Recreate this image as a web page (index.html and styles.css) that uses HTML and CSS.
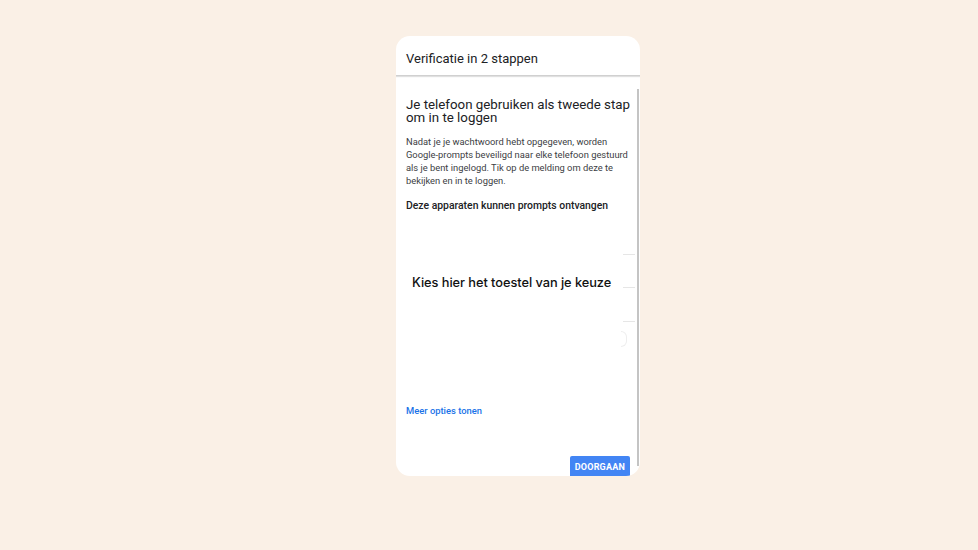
FILE: index.html
```html
<!DOCTYPE html>
<html lang="nl">
<head>
<meta charset="utf-8">
<title>Verificatie in 2 stappen</title>
<link rel="stylesheet" href="styles.css">
</head>
<body>
<div class="card">
  <div class="header">Verificatie in 2 stappen</div>
  <div class="body">
    <div class="main">
      <h1 class="title">Je telefoon gebruiken als tweede stap om in te loggen</h1>
      <p class="text">Nadat je je wachtwoord hebt opgegeven, worden Google-prompts beveiligd naar elke telefoon gestuurd als je bent ingelogd. Tik op de melding om deze te bekijken en in te loggen.</p>
      <h2 class="subtitle">Deze apparaten kunnen prompts ontvangen</h2>
      <div class="devices">
        <div class="choose">Kies hier het toestel van je keuze</div>
        <div class="rail">
          <div class="divider d1"></div>
          <div class="divider d2"></div>
          <div class="divider d3"></div>
          <div class="arc"></div>
        </div>
      </div>
      <a class="more" href="#">Meer opties tonen</a>
      <div class="actions">
        <button class="btn">DOORGAAN</button>
      </div>
    </div>
    <div class="track"></div>
  </div>
</div>
</body>
</html>
```
FILE: styles.css
```css
html, body {
  margin: 0;
  padding: 0;
}
body {
  background: #faf0e6;
  font-family: Roboto, "Liberation Sans", sans-serif;
  color: #202124;
  width: 978px;
  height: 550px;
  overflow: hidden;
}
.card {
  margin: 36px 0 0 396px;
  width: 244px;
  height: 440px;
  background: #fff;
  border-radius: 14px;
  overflow: hidden;
  display: flex;
  flex-direction: column;
}
.header {
  height: 40px;
  flex: none;
  box-sizing: border-box;
  padding: 15px 0 0 10px;
  font-size: 13px;
  line-height: 16px;
  color: #202124;
  border-bottom: 1px solid #d0d0d0;
  box-shadow: 0 1px 1px rgba(0,0,0,0.12);
}
.body {
  flex: 1;
  display: flex;
  min-height: 0;
}
.main {
  flex: 1;
  padding: 22px 0 0 10px;
  display: flex;
  flex-direction: column;
}
.track {
  width: 2px;
  margin: 13px 1px 10px 0;
  background: #c4c4c4;
}
.title {
  margin: 0;
  font-size: 13.3px;
  line-height: 13px;
  font-weight: 400;
  color: #202124;
}
.text {
  margin: 11px 0 0;
  font-size: 9.35px;
  line-height: 13px;
  color: #3c4043;
}
.subtitle {
  margin: 12px 0 0;
  font-size: 10.4px;
  line-height: 14px;
  font-weight: 500;
  color: #202124;
}
.devices {
  height: 192px;
  flex: none;
  display: flex;
}
.choose {
  flex: 1;
  margin: 62px 0 0 6px;
  font-family: Inter, "Open Sans", sans-serif;
  font-size: 12.8px;
  font-weight: 500;
  line-height: 16px;
  letter-spacing: -0.05px;
  color: #111;
  white-space: nowrap;
}
.rail {
  width: 14px;
  margin-right: 2px;
  display: flex;
  flex-direction: column;
  align-items: flex-end;
}
.divider {
  height: 1px;
  width: 12px;
  background: #e6e6e6;
}
.d1 { margin-top: 41px; }
.d2 { margin-top: 32px; }
.d3 { margin-top: 33px; }
.arc {
  margin: 9px 8px 0 0;
  width: 5px;
  height: 14px;
  border-radius: 0 7px 7px 0;
  border: 1px solid #eeeeee;
  border-left: none;
}
.more {
  font-size: 9.4px;
  font-weight: 500;
  line-height: 12px;
  color: #1a73e8;
  text-decoration: none;
}
.actions {
  display: flex;
  justify-content: flex-end;
  margin-top: 39px;
  padding-right: 7px;
}
.btn {
  background: #4285f4;
  color: #fff;
  border: none;
  border-radius: 2px;
  font-family: Roboto, "Liberation Sans", sans-serif;
  font-size: 9px;
  font-weight: 700;
  letter-spacing: 0.2px;
  height: 22px;
  padding: 0 5px;
  line-height: 22px;
}
```
